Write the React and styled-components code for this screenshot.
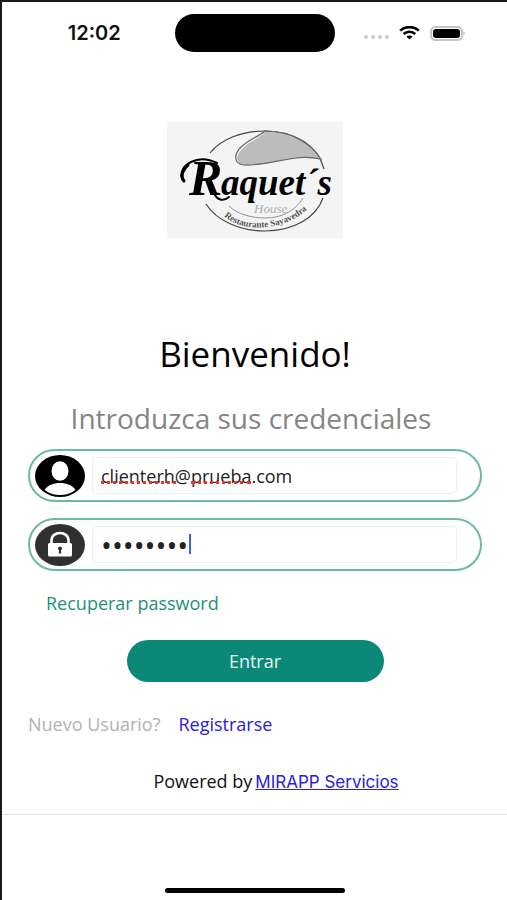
import { useState } from "react";
import styled, { createGlobalStyle } from "styled-components";

function StatusBar() {
  return (
    <StatusBarStyle>
      <Time>12:02</Time>
      <Island />
      <Signals>
        <svg width="26" height="14" viewBox="0 0 26 14" fill="#c9c9c9" aria-hidden="true">
          <circle cx="3" cy="11" r="2" />
          <circle cx="10" cy="11" r="2" />
          <circle cx="17" cy="11" r="2" />
          <circle cx="24" cy="11" r="2" />
        </svg>
        <svg width="21" height="14" viewBox="0 0 21 14" fill="none" stroke="#000" aria-hidden="true">
          <path d="M1.2 4.6C6.2 -.1 14.8 -.1 19.8 4.6" strokeWidth="2.6" />
          <path d="M4.7 8C8 4.9 13 4.9 16.3 8" strokeWidth="2.5" />
          <path d="M7.4 10.6C9 9 12 9 13.6 10.6L10.5 13.4z" fill="#000" stroke="none" />
        </svg>
        <svg width="36" height="15" viewBox="0 0 36 15" aria-hidden="true">
          <rect x="1" y="1" width="31" height="13" rx="4.5" fill="#fff" stroke="#c4c4c4" strokeWidth="2" />
          <rect x="3" y="3" width="27" height="9" rx="3" fill="#000" />
          <path d="M33.5 5.5a2.4 2.4 0 0 1 0 4z" fill="#aaa" />
        </svg>
      </Signals>
    </StatusBarStyle>
  );
}

function Logo() {
  return (
    <LogoStyle viewBox="0 0 176 116" role="img" aria-label="Raquet´s House">
      <rect width="176" height="116" fill="#f4f4f4" />
      <g fill="none" stroke="#444" strokeWidth="1.2">
        <path d="M43 31C54 17 75 9 98 9C128 9 151 24 157 47" />
        <path d="M39 82C49 98 72 109 98 109C126 109 149 96 156 76" />
        <path d="M62 84C70 92 84 96 98 96C116 96 129 88 136 76" stroke="#777" strokeWidth=".8" />
      </g>
      <path
        d="M98 10C123 9 143 20 154 38C128 31 105 44 79 43C68 43 68 34 75 27C82 19 92 17 98 10Z"
        fill="#bcbcbc"
      />
      <path
        d="M98 9C123 9 143 20 154 37C126 31 105 44 77 43C66 42 67 32 74 25C82 17 91 15 98 9Z"
        fill="none"
        stroke="#666"
        strokeWidth="1.2"
      />
      <g fill="none" stroke="#000" strokeLinecap="round">
        <path d="M17 59C12 55 14 45 24 40C32 36 42 37 50 41" strokeWidth="2" />
        <path d="M17 59C13 54 16 47 21 43" strokeWidth="3" />
        <path d="M47 71C50 78 56 80 62 75" strokeWidth="2" />
      </g>
      <text y="73" fontFamily="'Liberation Serif', serif" fontWeight="700" fontStyle="italic">
        <tspan x="22" fontSize="50">R</tspan>
        <tspan x="54" fontSize="37">aquet´s</tspan>
      </text>
      <text x="87" y="91" fontFamily="'Liberation Serif', serif" fontSize="13" fontStyle="italic" fill="#aaa">
        House
      </text>
      <path id="logo-arc" d="M55 92C73 112 122 111 146 81" fill="none" />
      <text fontFamily="'Liberation Serif', serif" fontSize="9" fontWeight="700" fill="#555">
        <textPath href="#logo-arc" startOffset="3">Restaurante Sayavedra</textPath>
      </text>
    </LogoStyle>
  );
}

function UserIcon() {
  return (
    <svg width="50" height="42" viewBox="0 0 50 42" aria-hidden="true">
      <ellipse cx="25" cy="21" rx="25" ry="21" fill="#000" />
      <ellipse cx="25" cy="16" rx="8.5" ry="9.8" fill="#fff" />
      <path d="M9.5 35C13 30 18 28 25 28S37 30 40.5 35C36 38.5 31 40 25 40S14 38.5 9.5 35Z" fill="#fff" />
    </svg>
  );
}

function LockIcon() {
  return (
    <svg width="50" height="42" viewBox="0 0 50 42" aria-hidden="true">
      <ellipse cx="25" cy="21" rx="25" ry="21" fill="#303030" />
      <path d="M16.5 20V16.5C16.5 6.5 33.5 6.5 33.5 16.5V20" fill="none" stroke="#fff" strokeWidth="2.6" />
      <rect x="13" y="19" width="24" height="13.5" rx="1.5" fill="#fff" />
      <circle cx="25" cy="24.5" r="2" fill="#303030" />
      <path d="M24.2 25h1.6l.5 4.5h-2.6z" fill="#303030" />
    </svg>
  );
}

export default function App() {
  const [email, setEmail] = useState("clienterh@prueba.com");
  const [password, setPassword] = useState("12345678");

  return (
    <Screen>
      <GlobalStyle />
      <StatusBar />
      <Main>
        <Logo />
        <Title>Bienvenido!</Title>
        <Subtitle>Introduzca sus credenciales</Subtitle>
        <Form onSubmit={(e) => e.preventDefault()}>
          <Field>
            <label htmlFor="email" aria-label="Email">
              <UserIcon />
            </label>
            <InputArea>
              <Input
                id="email"
                type="text"
                spellCheck={false}
                value={email}
                onChange={(e) => setEmail(e.target.value)}
              />
              <SpellMark $left={9} $width={75} />
              <SpellMark $left={99} $width={60} />
            </InputArea>
          </Field>
          <Field>
            <label htmlFor="password" aria-label="Password">
              <LockIcon />
            </label>
            <InputArea>
              <Input
                id="password"
                type="password"
                value={password}
                onChange={(e) => setPassword(e.target.value)}
              />
              <Caret />
            </InputArea>
          </Field>
          <Recover href="#recuperar">Recuperar password</Recover>
          <Submit type="submit">Entrar</Submit>
        </Form>
        <Register>
          <span>Nuevo Usuario?</span>
          <a href="#registro">Registrarse</a>
        </Register>
        <Powered>
          <span>Powered by</span>
          <a href="#mirapp">MIRAPP Servicios</a>
        </Powered>
      </Main>
      <Bottom>
        <HomeIndicator />
      </Bottom>
    </Screen>
  );
}

const GlobalStyle = createGlobalStyle`
*{
  box-sizing: border-box;
}
body{
  margin: 0;
  background-color: #fff;
  color: #111;
  font-family: "Open Sans", "Noto Sans", sans-serif;
}
a{
  text-decoration: none;
}
svg{
  display: block;
}
`;

const Screen = styled.div`
display: flex;
flex-direction: column;
min-height: 100vh;
border-top: 2px solid #1a1718;
border-left: 2px solid #1a1718;
`;

const StatusBarStyle = styled.header`
display: grid;
grid-template-columns: 1fr 160px 1fr;
align-items: center;
padding-top: 12px;
`;

const Time = styled.div`
padding-left: 12px;
text-align: center;
font-family: Inter, sans-serif;
font-size: 20px;
line-height: 24px;
font-weight: 600;
`;

const Island = styled.div`
height: 38px;
border-radius: 20px;
background-color: #000;
`;

const Signals = styled.div`
display: flex;
align-items: center;
gap: 10px;
padding-left: 28px;
`;

const Main = styled.main`
display: flex;
flex-direction: column;
padding: 70px 25px 20px 26px;
border-bottom: 1px solid #e2e2e2;
`;

const LogoStyle = styled.svg`
width: 176px;
height: 116px;
align-self: center;
`;

const Title = styled.h1`
margin: 92px 0 0;
text-align: center;
font-size: 35px;
line-height: 48px;
font-weight: 400;
color: #000;
`;

const Subtitle = styled.p`
margin: 20px 0 0;
padding-right: 8px;
text-align: center;
font-size: 28px;
line-height: 40px;
color: #858585;
`;

const Form = styled.form`
display: flex;
flex-direction: column;
margin-top: 11px;
`;

const Field = styled.div`
display: flex;
align-items: center;
gap: 7px;
height: 53px;
margin-bottom: 16px;
padding: 0 23px 0 5px;
border: 2px solid #6fb8a8;
border-radius: 30px;
`;

const InputArea = styled.div`
position: relative;
flex: 1;
`;

const Input = styled.input`
display: block;
width: 100%;
height: 37px;
padding: 0 8px;
border: 1px solid #eee;
border-radius: 5px;
outline: none;
background-color: #fff;
color: #222;
font-family: inherit;
font-size: ${(props) => (props.type === "password" ? "29px" : "18px")};
`;

const SpellMark = styled.span`
position: absolute;
left: ${(props) => props.$left}px;
top: 24px;
width: ${(props) => props.$width}px;
border-bottom: 3px dotted #e8362c;
pointer-events: none;
`;

const Caret = styled.span`
position: absolute;
left: 97px;
top: 8px;
width: 2px;
height: 20px;
background-color: #3b66e0;
`;

const Recover = styled.a`
align-self: flex-start;
margin: 4px 0 0 18px;
font-size: 18px;
line-height: 24px;
color: #1f9078;
`;

const Submit = styled.button`
align-self: center;
width: 257px;
height: 42px;
margin-top: 25px;
border: 0;
border-radius: 21px;
background-color: #0b8878;
color: #e9f6f3;
font-family: inherit;
font-size: 18px;
`;

const Register = styled.div`
display: flex;
gap: 18px;
margin-top: 30px;
font-size: 18px;
line-height: 24px;
color: #b2b2b2;
a{
  color: #2a20dc;
}
`;

const Powered = styled.div`
display: flex;
align-items: baseline;
justify-content: center;
gap: 3px;
margin-top: 33px;
padding-left: 42px;
font-size: 18px;
line-height: 24px;
a{
  color: #2a20dc;
  font-family: Inter, sans-serif;
  font-size: 17px;
  text-decoration: underline;
}
`;

const Bottom = styled.footer`
display: flex;
flex: 1;
align-items: flex-end;
justify-content: center;
padding-bottom: 7px;
`;

const HomeIndicator = styled.div`
width: 180px;
height: 5px;
border-radius: 3px;
background-color: #000;
`;
